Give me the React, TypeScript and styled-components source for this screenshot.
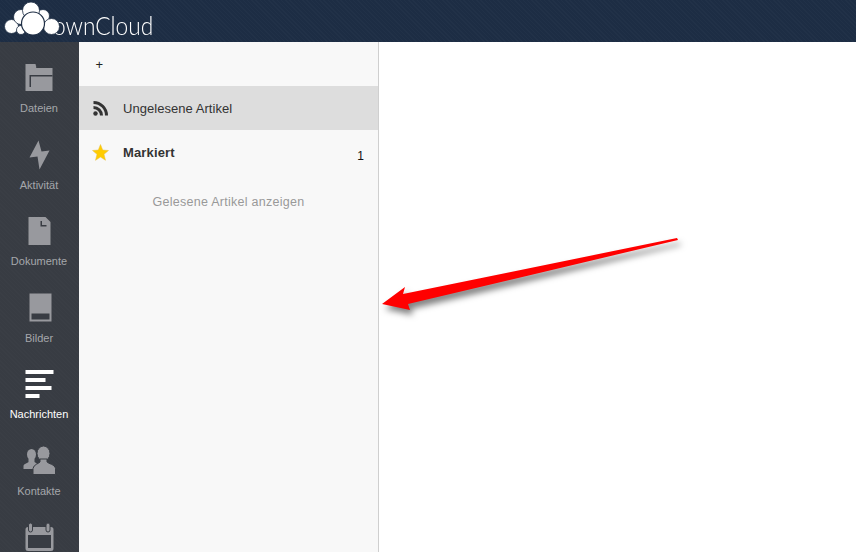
import React from "react";
import styled, { createGlobalStyle } from "styled-components";

const Global = createGlobalStyle`
  html, body { margin: 0; padding: 0; height: 100%; overflow: hidden; background: #fff; }
  #root { height: 100%; }
`;

const Page = styled.div`
  width: 856px;
  height: 552px;
  display: flex;
  flex-direction: column;
  font-family: "Liberation Sans", Arial, sans-serif;
  overflow: hidden;
`;

const Header = styled.header`
  height: 42px;
  flex: none;
  background: #1d2d44;
  background-image: repeating-linear-gradient(45deg, rgba(255, 255, 255, 0.018) 0 1px, transparent 1px 3px);
  display: flex;
  align-items: flex-start;
  position: relative;
`;

const LogoCloud = styled.svg`
  position: absolute;
  left: 0;
  top: 0;
  z-index: 1;
`;

const LogoText = styled.span`
  margin: 9px 0 0 53px;
  font-family: Lato, sans-serif;
  font-weight: 300;
  font-size: 26px;
  line-height: 32px;
  color: #fff;
  display: inline-block;
  transform: scaleX(0.875);
  transform-origin: left center;
`;

const Body = styled.div`
  flex: 1;
  display: flex;
  min-height: 0;
`;

const Nav = styled.nav`
  width: 78px;
  padding-right: 1px;
  flex: none;
  background: #383c43;
  background-image: repeating-linear-gradient(45deg, rgba(255, 255, 255, 0.012) 0 1px, transparent 1px 3px);
  overflow: hidden;
`;

const NavItem = styled.div<{ $active?: boolean }>`
  height: 76.5px;
  display: flex;
  flex-direction: column;
  align-items: center;
  color: ${(p) => (p.$active ? "#fff" : "#a5a7ab")};
  fill: ${(p) => (p.$active ? "#fff" : "#98999e")};
`;

const NavIcon = styled.svg`
  width: 32px;
  height: 32px;
  margin-top: 21px;
  flex: none;
  overflow: visible;
`;

const NavLabel = styled.span`
  font-size: 11px;
  line-height: 13px;
  margin-top: 7px;
  white-space: nowrap;
`;

const Panel = styled.aside`
  width: 299px;
  flex: none;
  background: #f8f8f8;
  border-right: 1px solid #cfcfcf;
`;

const AddRow = styled.div`
  height: 44px;
  display: flex;
  align-items: center;
  padding-left: 16.5px;
  font-size: 13px;
  color: #222;
`;

const FeedRow = styled.div<{ $active?: boolean }>`
  height: 44px;
  display: flex;
  align-items: center;
  padding-left: 13px;
  position: relative;
  background: ${(p) => (p.$active ? "#dddddd" : "transparent")};
`;

const FeedIcon = styled.svg`
  width: 17px;
  height: 17px;
  margin-right: 14px;
  flex: none;
`;

const FeedTitle = styled.span<{ $bold?: boolean }>`
  font-size: 13px;
  letter-spacing: ${(p) => (p.$bold ? "0.15px" : "0.04px")};
  color: #333;
  font-weight: ${(p) => (p.$bold ? 700 : 400)};
`;

const Count = styled.span`
  position: absolute;
  right: 14px;
  top: 19px;
  font-size: 12px;
  line-height: 14px;
  color: #111;
`;

const ShowRead = styled.div`
  margin-top: 19px;
  text-align: center;
  font-size: 12.5px;
  line-height: 18px;
  letter-spacing: 0.27px;
  color: #999;
`;

const Content = styled.main`
  flex: 1;
  background: #fff;
`;

const Arrow = styled.svg`
  position: absolute;
  left: 0;
  top: 0;
  pointer-events: none;
  filter: drop-shadow(3px 5px 3px rgba(0, 0, 0, 0.5));
`;

const BG = "#383c43";

const items = [
  {
    label: "Dateien",
    icon: (
      <>
        <path d="M2.500 1h10l1 4h16v23h-27z" />
        <path d="M6.500 24V12h23v1.500H8V24z" fill={BG} />
        <path d="M13 4.500h13V5H13z" fill={BG} />
      </>
    ),
  },
  { label: "Aktivität", icon: <path d="M15.500.5 6.500 17.500 14.500 16.500 16.500 29.500 26.500 10.500 18.500 11.500z" /> },
  {
    label: "Dokumente",
    icon: (
      <>
        <path d="M5.500 1h17l5 5v23h-22z" />
        <path d="M17.500 5H19v4h4.500v1.500h-6z" fill={BG} />
      </>
    ),
  },
  {
    label: "Bilder",
    icon: (
      <>
        <path d="M6.500.5h22v28h-22z" />
        <path d="M8.500 20.500h18v6h-18z" fill={BG} />
      </>
    ),
  },
  {
    label: "Nachrichten",
    active: true,
    icon: <path d="M2.500 1h28v4h-28zM2.500 9h20v4h-20zM2.500 17h26v4h-26zM2.500 25h14v4h-14z" />,
  },
  {
    label: "Kontakte",
    icon: (
      <>
        <ellipse cx="8.500" cy="8.500" rx="4.500" ry="5.500" />
        <path d="M5.500 13h6v3l3 2v5H.5v-3c0-2 4-3 5-4z" />
        <ellipse cx="20.500" cy="7.500" rx="6.500" ry="7.500" stroke={BG} />
        <path d="M17 13h7v3c1 1.500 8 2.500 8.500 6.500v6H10v-6c.5-4 6-5 7-6.500z" stroke={BG} />
      </>
    ),
  },
  {
    icon: (
      <>
        <path d="M5 5h23a2.500 2.500 0 0 1 2.500 2.500v19a2.500 2.500 0 0 1-2.500 2.500H5a2.500 2.500 0 0 1-2.500-2.500v-19A2.500 2.500 0 0 1 5 5z" />
        <path d="M5 13h23v13H5z" fill={BG} />
        <rect x="5.500" y="1" width="4" height="9" rx="2" stroke={BG} />
        <rect x="23" y="1" width="4" height="9" rx="2" stroke={BG} />
      </>
    ),
  },
];

export default function App() {
  return (
    <Page>
      <Global />
      <Header>
        <LogoText>ownCloud</LogoText>
        <LogoCloud width="62" height="42" viewBox="0 0 62 42" fill="#fff" stroke="#1d2d44" strokeWidth="0.8">
          <circle cx="11.500" cy="26.500" r="7" />
          <circle cx="21" cy="17" r="7.500" />
          <circle cx="43" cy="16" r="6.500" />
          <circle cx="31" cy="10.500" r="8.500" />
          <circle cx="21" cy="30" r="4.500" />
          <circle cx="51.500" cy="26.500" r="8" />
          <circle cx="33" cy="23.500" r="11.500" strokeWidth="1.200" />
        </LogoCloud>
      </Header>
      <Body>
        <Nav>
          {items.map((it, i) => (
            <NavItem key={i} $active={it.active}>
              <NavIcon viewBox="0 0 32 32">{it.icon}</NavIcon>
              {it.label && <NavLabel>{it.label}</NavLabel>}
            </NavItem>
          ))}
        </Nav>
        <Panel>
          <AddRow>+</AddRow>
          <FeedRow $active>
            <FeedIcon viewBox="0 0 17 17" fill="none" stroke="#333" strokeWidth="3">
              <circle cx="3.500" cy="13.500" r="2.200" fill="#333" stroke="none" />
              <path d="M1.500 7.500a8 8 0 0 1 8 8" />
              <path d="M1.500 2.500a13 13 0 0 1 13 13" />
            </FeedIcon>
            <FeedTitle>Ungelesene Artikel</FeedTitle>
          </FeedRow>
          <FeedRow>
            <FeedIcon viewBox="0 0 17 17">
              <polygon
                points="8.500,0.500 10.700,6 16.500,6.500 12,10.300 13.500,16.300 8.500,13 3.500,16.300 5,10.300 0.500,6.500 6.300,6"
                fill="#ffcc00"
                stroke="#e8c040"
                strokeWidth="0.5"
              />
            </FeedIcon>
            <FeedTitle $bold>Markiert</FeedTitle>
            <Count>1</Count>
          </FeedRow>
          <ShowRead>Gelesene Artikel anzeigen</ShowRead>
        </Panel>
        <Content />
      </Body>
      <Arrow width="856" height="552" viewBox="0 0 856 552">
        <polygon fill="#ff0000" points="677,238 678,240 408,304 410,310 382,304 405,287 403,294" />
      </Arrow>
    </Page>
  );
}
